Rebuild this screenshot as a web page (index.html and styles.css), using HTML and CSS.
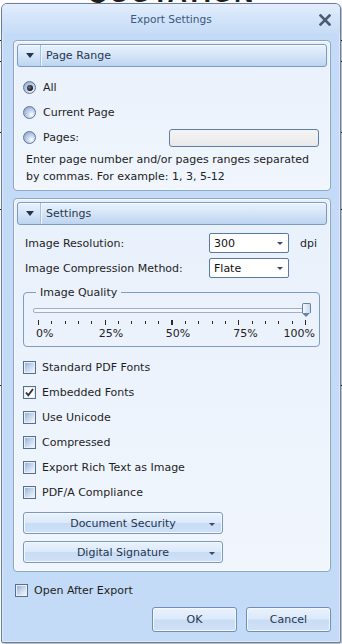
FILE: index.html
```html
<!DOCTYPE html>
<html>
<head>
<meta charset="utf-8">
<link rel="stylesheet" href="styles.css">
</head>
<body>
<div class="doc">
  <div class="doc-title">QUOTATION</div>
  <div class="doc-rules">
    <div class="rule r1"></div>
    <div class="rule r2"></div>
    <div class="rule r3"></div>
    <div class="rule r4"></div>
    <div class="rule r5"></div>
  </div>
</div>

<div class="dialog">
  <div class="titlebar">
    <span></span>
    <span class="title">Export Settings</span>
    <span class="close"><svg width="12" height="12" viewBox="0 0 12 12"><path d="M1.5 1.5 L10.5 10.5 M10.5 1.5 L1.5 10.5" stroke="#4c5b70" stroke-width="2.6" stroke-linecap="square"/></svg></span>
  </div>

  <div class="dialog-body">
    <section class="panel">
      <div class="panel-head"><span class="caret-box"><span class="caret"></span></span><span class="head-label">Page Range</span></div>
      <div class="panel-content range">
        <label class="opt"><span class="radio checked"></span><span>All</span></label>
        <label class="opt"><span class="radio"></span><span>Current Page</span></label>
        <label class="opt"><span class="radio"></span><span>Pages:</span><span class="textbox"></span></label>
        <p class="help">Enter page number and/or pages ranges separated by commas. For example: 1, 3, 5-12</p>
      </div>
    </section>

    <section class="panel panel-settings">
      <div class="panel-head"><span class="caret-box"><span class="caret"></span></span><span class="head-label">Settings</span></div>
      <div class="panel-content settings">
        <div class="field-grid">
          <span>Image Resolution:</span>
          <span class="select"><span>300</span><span class="sel-arrow"></span></span>
          <span class="unit">dpi</span>
          <span>Image Compression Method:</span>
          <span class="select"><span>Flate</span><span class="sel-arrow"></span></span>
          <span></span>
        </div>

        <fieldset class="quality">
          <legend>Image Quality</legend>
          <div class="slider">
            <div class="track"></div>
            <div class="thumb"></div>
          </div>
          <div class="ticks"></div>
          <div class="tick-labels">
            <span style="left:0%">0%</span>
            <span style="left:22.5%">25%</span>
            <span style="left:46.5%">50%</span>
            <span style="left:70.7%">75%</span>
            <span class="last">100%</span>
          </div>
        </fieldset>

        <div class="checks">
          <label class="opt"><span class="check"></span><span>Standard PDF Fonts</span></label>
          <label class="opt"><span class="check checked"><svg width="11" height="11" viewBox="0 0 11 11"><path d="M2 5.5 L4.3 8.3 L9 2" fill="none" stroke="#333" stroke-width="1.9"/></svg></span><span>Embedded Fonts</span></label>
          <label class="opt"><span class="check"></span><span>Use Unicode</span></label>
          <label class="opt"><span class="check"></span><span>Compressed</span></label>
          <label class="opt"><span class="check"></span><span>Export Rich Text as Image</span></label>
          <label class="opt"><span class="check"></span><span>PDF/A Compliance</span></label>
        </div>

        <div class="dd-buttons">
          <button class="btn dd">Document Security<span class="dd-arrow"></span></button>
          <button class="btn dd">Digital Signature<span class="dd-arrow"></span></button>
        </div>
      </div>
    </section>

    <label class="opt open-after"><span class="check"></span><span>Open After Export</span></label>

    <div class="actions">
      <button class="btn action">OK</button>
      <button class="btn action">Cancel</button>
    </div>
  </div>
</div>
</body>
</html>
```

FILE: styles.css
```css
html, body {
  margin: 0;
  padding: 0;
  background: #ffffff;
}
body {
  width: 342px;
  height: 644px;
  overflow: hidden;
  position: relative;
  font-family: "DejaVu Sans", Verdana, sans-serif;
  font-size: 11px;
  color: #1e1e1e;
}

/* document behind the dialog */
.doc-title {
  font-family: "Liberation Sans", Arial, sans-serif;
  font-weight: bold;
  font-size: 27px;
  line-height: 20px;
  height: 19px;
  text-align: center;
  letter-spacing: 1px;
  margin-top: -17px;
}
.doc-rules {
  display: flex;
  flex-direction: column;
}
.rule {
  border-top: 1px solid #222;
}
.r1 { margin-top: 38px; }
.r2 { margin-top: 20px; }
.r3 { margin-top: 70px; }
.r4 { margin-top: 76px; }
.r5 { margin-top: 175px; }

/* dialog */
.dialog {
  position: absolute;
  left: 1px;
  top: 3px;
  width: 340px;
  height: 640px;
  box-sizing: border-box;
  border: 1px solid #6b7e99;
  border-radius: 6px 6px 2px 2px;
  background: #c4dbf7;
  box-shadow: 1px 1px 2px rgba(0, 0, 0, 0.35), inset 0 0 0 1px #dbe9fb;
  display: flex;
  flex-direction: column;
}
.titlebar {
  height: 29px;
  flex: none;
  display: grid;
  grid-template-columns: 1fr auto 1fr;
  align-items: center;
  border-radius: 5px 5px 0 0;
  background: linear-gradient(#e3eefc 0%, #d4e5fa 45%, #c7dcf6 100%);
}
.title {
  color: #3b577d;
  font-size: 10.6px;
  padding-top: 1px;
}
.close {
  justify-self: end;
  margin-right: 9px;
  display: flex;
  padding-top: 2px;
}

.dialog-body {
  flex: 1;
  padding: 7px 9px 0 11px;
  display: flex;
  flex-direction: column;
}

.panel {
  border: 1px solid #8ba6c9;
  border-radius: 4px;
  padding: 3px;
  background: linear-gradient(#e8f0fb, #f1f6fd);
  box-shadow: inset 0 0 0 1px #f6f9fe;
}
.panel-settings {
  margin-top: 7px;
}
.panel-head {
  height: 21px;
  display: flex;
  align-items: center;
  border: 1px solid #7b9bc5;
  border-radius: 3px;
  background: linear-gradient(#e9f2fd 0%, #d7e6f9 45%, #bdd4f0 100%);
  box-shadow: inset 0 1px 0 #f8fbff;
  color: #27384d;
}
.caret-box {
  width: 22px;
  height: 100%;
  display: flex;
  align-items: center;
  justify-content: center;
  border-right: 1px solid #a9c1e0;
  box-shadow: 1px 0 0 #eef5fe;
}
.caret {
  width: 0;
  height: 0;
  border-left: 4px solid transparent;
  border-right: 4px solid transparent;
  border-top: 5px solid #24364d;
  margin-left: 1px;
}
.head-label {
  padding-left: 5px;
  font-size: 11px;
}

.panel-content.range {
  padding: 8px 8px 2px 6px;
}
.opt {
  height: 25px;
  display: flex;
  align-items: center;
}
.radio {
  width: 13px;
  height: 13px;
  box-sizing: border-box;
  border-radius: 50%;
  border: 1px solid #5d7699;
  background: radial-gradient(circle at 68% 70%, #ffffff 0%, #c9d8ee 35%, #7f9cc6 100%);
  margin-right: 7px;
  flex: none;
  position: relative;
}
.radio.checked::after {
  content: "";
  position: absolute;
  left: 2.5px;
  top: 2.5px;
  width: 6px;
  height: 6px;
  border-radius: 50%;
  background: radial-gradient(circle at 40% 40%, #6b7686 0%, #111 70%);
}
.textbox {
  margin-left: auto;
  width: 150px;
  height: 18px;
  box-sizing: border-box;
  border: 1px solid #5c7fa9;
  border-radius: 3px;
  background: linear-gradient(#f4f4f4, #e9e9e9);
}
.help {
  margin: 1px 0 0 3px;
  line-height: 17px;
  color: #222;
}

/* settings */
.panel-content.settings {
  padding: 8px 0 5px 6px;
}
.field-grid {
  display: grid;
  grid-template-columns: 184px 80px auto;
  grid-auto-rows: 20px;
  row-gap: 5px;
  align-items: center;
  padding-left: 2px;
}
.select {
  height: 20px;
  box-sizing: border-box;
  border: 1px solid #5a7aa3;
  border-radius: 2px;
  background: #ffffff;
  display: flex;
  align-items: center;
  justify-content: space-between;
  padding: 0 5px 0 4px;
  color: #111;
}
.sel-arrow, .dd-arrow {
  width: 0;
  height: 0;
  border-left: 3px solid transparent;
  border-right: 3px solid transparent;
  border-top: 3px solid #3a4a60;
}
.unit {
  padding-left: 11px;
}

.quality {
  margin: 8px 0 0 0;
  width: 297px;
  box-sizing: border-box;
  border: 1px solid #7f9cc3;
  border-radius: 4px;
  padding: 4px 0 0 0;
  height: 61px;
}
.quality legend {
  margin-left: 12px;
  padding: 0 4px;
  color: #222;
}
.slider {
  position: relative;
  height: 14px;
  margin: 0 11px 0 9px;
}
.track {
  position: absolute;
  left: 0;
  right: 0;
  top: 5px;
  height: 3px;
  border: 1px solid #9cb0ca;
  border-radius: 2px;
  background: #f4f6f9;
}
.thumb {
  position: absolute;
  right: -3px;
  top: 0;
  width: 7px;
  height: 9px;
  border: 1px solid #6582a8;
  border-bottom: none;
  border-radius: 2px 2px 0 0;
  background: linear-gradient(90deg, #f3f7fc, #c9d9ee);
}
.thumb::after {
  content: "";
  position: absolute;
  left: -1px;
  top: 9px;
  width: 0;
  height: 0;
  border-left: 4.5px solid transparent;
  border-right: 4.5px solid transparent;
  border-top: 4px solid #6582a8;
}
.ticks {
  margin: 3px 0 0 14px;
  width: 268px;
  height: 5px;
  background:
    repeating-linear-gradient(90deg, #2a2a2a 0 1px, transparent 1px 66.75px),
    repeating-linear-gradient(90deg, #2a2a2a 0 1px, transparent 1px 13.35px);
  background-size: 100% 5px, 100% 3px;
  background-position: 0 0, 0 1px;
  background-repeat: no-repeat;
}
.tick-labels {
  position: relative;
  height: 13px;
  margin: 2px 4px 0 12px;
  color: #222;
}
.tick-labels span {
  position: absolute;
  top: 0;
}
.tick-labels .last {
  right: 0;
}

.checks {
  margin-top: 8px;
  display: flex;
  flex-direction: column;
}
.check {
  width: 13px;
  height: 13px;
  box-sizing: border-box;
  border: 1px solid #55708f;
  background: linear-gradient(135deg, #8eaad3 0%, #c8d7ee 50%, #fbfcfe 100%);
  box-shadow: inset 0 0 0 1px #e9eff8;
  margin-right: 6px;
  flex: none;
  display: flex;
  align-items: center;
  justify-content: center;
}
.check.checked {
  background: linear-gradient(135deg, #f6f8fb, #ffffff);
}
.check svg {
  display: block;
}

.dd-buttons {
  margin-top: 7px;
  display: flex;
  flex-direction: column;
  gap: 7px;
}
.btn {
  font-family: "DejaVu Sans", Verdana, sans-serif;
  font-size: 11px;
  color: #24364d;
  border: 1px solid #7a99c2;
  border-radius: 3px;
  background: linear-gradient(#eaf2fd 0%, #dce9fa 48%, #c8dcf5 52%, #cfe1f7 100%);
  box-shadow: inset 0 0 0 1px #f3f8fe;
  padding: 0;
  cursor: default;
}
.btn.dd {
  width: 200px;
  height: 22px;
  position: relative;
  display: flex;
  align-items: center;
  justify-content: center;
}
.dd-arrow {
  position: absolute;
  right: 7px;
  top: 10px;
}

.open-after {
  margin: 8px 0 0 2px;
  height: 21px;
}
.open-after .check {
  margin-right: 6px;
}
.actions {
  margin-top: 6px;
  display: flex;
  justify-content: flex-end;
  gap: 9px;
}
.btn.action {
  width: 85px;
  height: 25px;
  border-color: #6f8fba;
}
```
